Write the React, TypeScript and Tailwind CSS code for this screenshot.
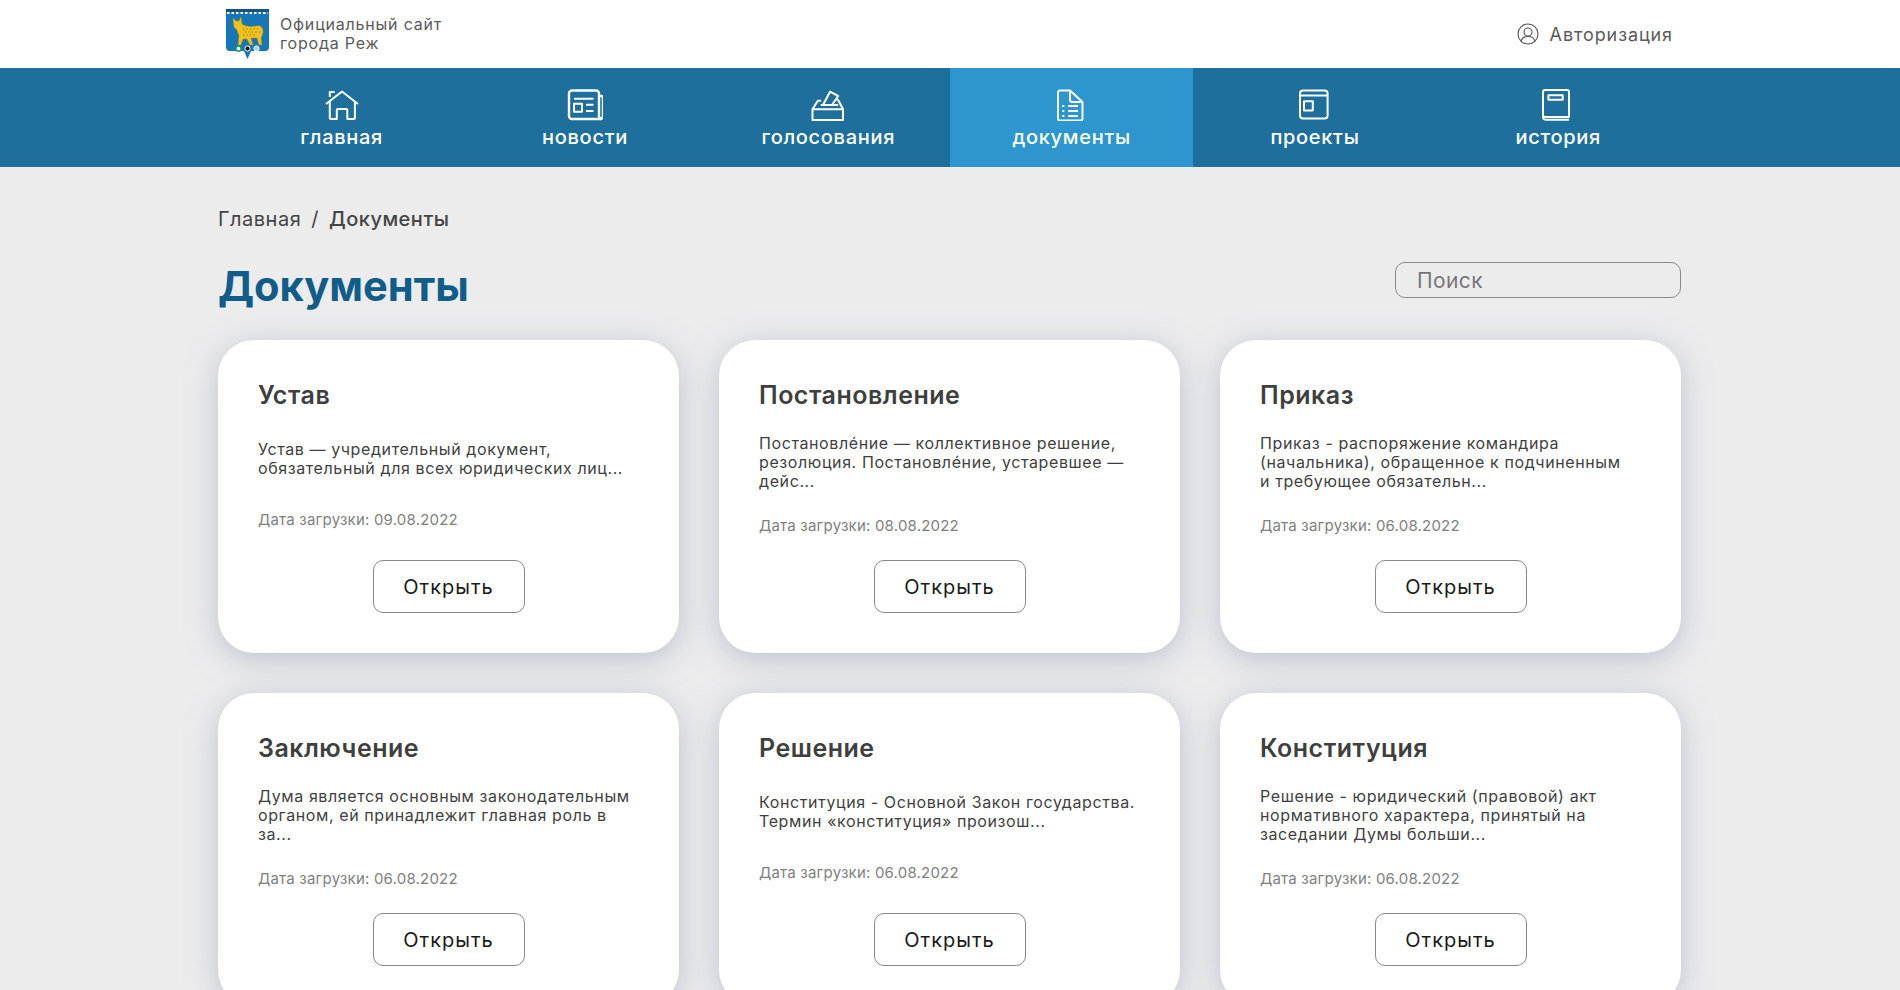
const navItems = [
  { label: 'главная', icon: 'home' },
  { label: 'новости', icon: 'news' },
  { label: 'голосования', icon: 'vote' },
  { label: 'документы', icon: 'docs', active: true },
  { label: 'проекты', icon: 'window' },
  { label: 'история', icon: 'book' },
];

const cards = [
  { title: 'Устав', text: 'Устав — учредительный документ, обязательный для всех юридических лиц...', date: '09.08.2022' },
  { title: 'Постановление', text: 'Постановле́ние — коллективное решение, резолюция. Постановле́ние, устаревшее — дейс...', date: '08.08.2022' },
  { title: 'Приказ', text: 'Приказ - распоряжение командира (начальника), обращенное к подчиненным и\u00a0требующее обязательн...', date: '06.08.2022' },
  { title: 'Заключение', text: 'Дума является основным законодательным органом, ей принадлежит главная роль в за...', date: '06.08.2022' },
  { title: 'Решение', text: 'Конституция - Основной Закон государства. Термин «конституция» произош...', date: '06.08.2022' },
  { title: 'Конституция', text: 'Решение - юридический (правовой) акт нормативного характера, принятый на заседании Думы больши...', date: '06.08.2022' },
];

function NavIcon({ name }: { name: string }) {
  return (
    <svg viewBox="0 0 36 32" className="h-8 w-9" fill="none" stroke="white" strokeWidth="2" strokeLinejoin="round">
      {name === 'home' && (
        <>
          <path d="M2 15 18 2.500 34 15" />
          <path d="M5.800 8V3h4.800" />
          <path d="M5.800 12.500V29a1 1 0 0 0 1 1h6V21a1 1 0 0 1 1-1h8.500a1 1 0 0 1 1 1v9h6.600a1 1 0 0 0 1-1V12.500" />
        </>
      )}
      {name === 'news' && (
        <>
          <path strokeWidth="2.400" d="M5 1.500h24a3 3 0 0 1 3 3v23a3 3 0 0 0 2 2.500H5a3 3 0 0 1-3-3V4.500a3 3 0 0 1 3-3z" />
          <path strokeWidth="2.400" d="M32 7h2a2 2 0 0 1 2 2v18a3 3 0 0 1-3 3" />
          <path d="M7 9.700h19.500M19 15.700h7.500M19 22h7.500" />
          <rect x="7" y="14.700" width="8" height="8" />
        </>
      )}
      {name === 'vote' && (
        <>
          <path d="M2.500 20.300 7.800 11.700h3.400M33 20.300l-4.800-9.300h-1.500" />
          <path d="M10.700 16h17.500" />
          <path d="M20 2.700 28.200 7 22 16h-9z" />
          <rect x="2.500" y="20.300" width="30.500" height="10.700" />
        </>
      )}
      {name === 'docs' && (
        <>
          <path d="M6 1.500h10L28.500 13v16.500a2 2 0 0 1-2 2H6a2 2 0 0 1-2-2v-26a2 2 0 0 1 2-2z" />
          <path d="M16 1.500V11a2 2 0 0 0 2 2h10.500" />
          <path d="M14.200 17H24M14.200 22H24M14.200 27H24" />
          <path strokeDasharray="2 3" d="M9.300 16v12" />
        </>
      )}
      {name === 'window' && (
        <>
          <rect x="3" y="1.500" width="27.600" height="28" rx="3" />
          <path d="M3 6.500h27.600" />
          <rect x="7" y="12.200" width="8.800" height="9.300" />
        </>
      )}
      {name === 'book' && (
        <>
          <path d="M5 1h22a2 2 0 0 1 2 2v25H5a2 2 0 0 1-2-2V3a2 2 0 0 1 2-2z" />
          <path d="M3 26.500V28a2.500 2.500 0 0 0 2.500 2.700H29" />
          <rect x="8.400" y="6.300" width="14.300" height="4.400" />
        </>
      )}
    </svg>
  );
}

function Logo() {
  return (
    <svg viewBox="0 0 43 52" className="h-[52px] w-[43px]">
      <path d="M0 1h43v38a4 4 0 0 1-4 4H25l-3.500 8-3.500-8H4a4 4 0 0 1-4-4z" fill="#1577b8" />
      <rect x="0" y="1" width="43" height="3" fill="#1d4f80" />
      <path strokeDasharray="2.500 2" d="M1 5h41" stroke="#ffffff" strokeWidth="2" />
      <path
        d="M8 19 7 10l3 3h3l2-4 1 7c2 2 8 3 14 2 4-1 7 1 7 5 0 3-1 5-2 7l1 7h-3l-2-7h-6l2 7h-3l-3-6h-4l-2 6h-3l1-9-2-6z"
        fill="#f2c21a"
        stroke="#a8861a"
        strokeWidth=".5"
      />
      <path strokeDasharray="1 2.500" d="M17 21h17M19 24h15M17 27h12" stroke="#7a5a10" strokeWidth="1" />
      <circle cx="12.500" cy="40.500" r="2.600" fill="#ffffff" stroke="#1f9a4c" strokeWidth="1.500" />
      <circle cx="21.500" cy="40.500" r="2.600" fill="#1a1a1a" stroke="#ffffff" strokeWidth="1" />
      <circle cx="30.500" cy="40.500" r="2.600" fill="#9fd3ef" stroke="#ffffff" strokeWidth="1" />
    </svg>
  );
}

function DocCard({ title, text, date }: { title: string; text: string; date: string }) {
  return (
    <div className="flex h-[313px] flex-col rounded-[36px] bg-white px-10 pb-10 pt-[41px] shadow-[0_6px_30px_rgba(140,155,175,0.5)]">
      <h3 className="text-[25px] font-semibold leading-[28px] tracking-[0.5px] text-[#3f3f3f]">{title}</h3>
      <div className="flex flex-1 flex-col justify-evenly">
        <p className="text-[16px] leading-[19px] tracking-[0.6px] text-[#3f3f3f]">{text}</p>
        <p className="text-[15px] leading-[19px] tracking-[0.2px] text-[#808080]">Дата загрузки: {date}</p>
      </div>
      <button className="mx-auto h-[53px] w-[152px] rounded-[10px] border border-[#888888] text-[20px] tracking-[1px] text-[#1a1a1a]">Открыть</button>
    </div>
  );
}

export default function App() {
  return (
    <div className="h-screen overflow-hidden bg-[#ececed] font-['Inter',sans-serif]">
      <header className="h-[68px] bg-white">
        <div className="mx-auto flex h-full w-[1464px] items-center justify-between pl-2 pr-[9px]">
          <div className="flex items-center gap-[11px]">
            <Logo />
            <div className="text-[16px] leading-[19px] tracking-[0.8px] text-[#5a5a5a]">
              Официальный сайт
              <br />
              города Реж
            </div>
          </div>
          <div className="flex items-center gap-[11px] text-[18px] tracking-[0.9px] text-[#5a5a5a]">
            <svg viewBox="0 0 22 22" className="h-[22px] w-[22px]" fill="none" stroke="#555555" strokeWidth="1.100">
              <circle cx="11" cy="11" r="10" />
              <circle cx="11" cy="9" r="4" />
              <path d="M4 18c1-3 4-4.500 7-4.500s6 1.500 7 4.500" />
            </svg>
            Авторизация
          </div>
        </div>
      </header>

      <nav className="h-[99px] bg-[#1f6f9c]">
        <div className="mx-auto grid h-full w-[1460px] grid-cols-6">
          {navItems.map(item => (
            <div key={item.label} className={`flex flex-col items-center pt-[21px] ${item.active ? 'bg-[#2d96cf]' : ''}`}>
              <NavIcon name={item.icon} />
              <span className="mt-[4px] text-[20px] font-medium leading-[24px] tracking-[0.7px] text-white">{item.label}</span>
            </div>
          ))}
        </div>
      </nav>

      <main className="mx-auto w-[1464px]">
        <div className="mt-[40px] flex items-center gap-[10px] text-[20px] leading-[24px] tracking-[0.5px] text-[#444444]">
          <span>Главная</span>
          <span>/</span>
          <span className="font-medium">Документы</span>
        </div>
        <div className="mt-[29px] flex items-start justify-between">
          <h1 className="text-[41.6px] font-bold leading-[52px] text-[#115d8a]">Документы</h1>
          <input
            placeholder="Поиск"
            className="mr-px mt-[2px] h-[36px] w-[286px] rounded-[10px] border border-[#8a8a8a] px-[21px] text-[21px] tracking-[0.4px] placeholder:text-[#777777]"
          />
        </div>
        <div className="mt-[28px] grid grid-cols-[461px_461px_461px] gap-10">
          {cards.map(card => (
            <DocCard key={card.title} {...card} />
          ))}
        </div>
      </main>
    </div>
  );
}
